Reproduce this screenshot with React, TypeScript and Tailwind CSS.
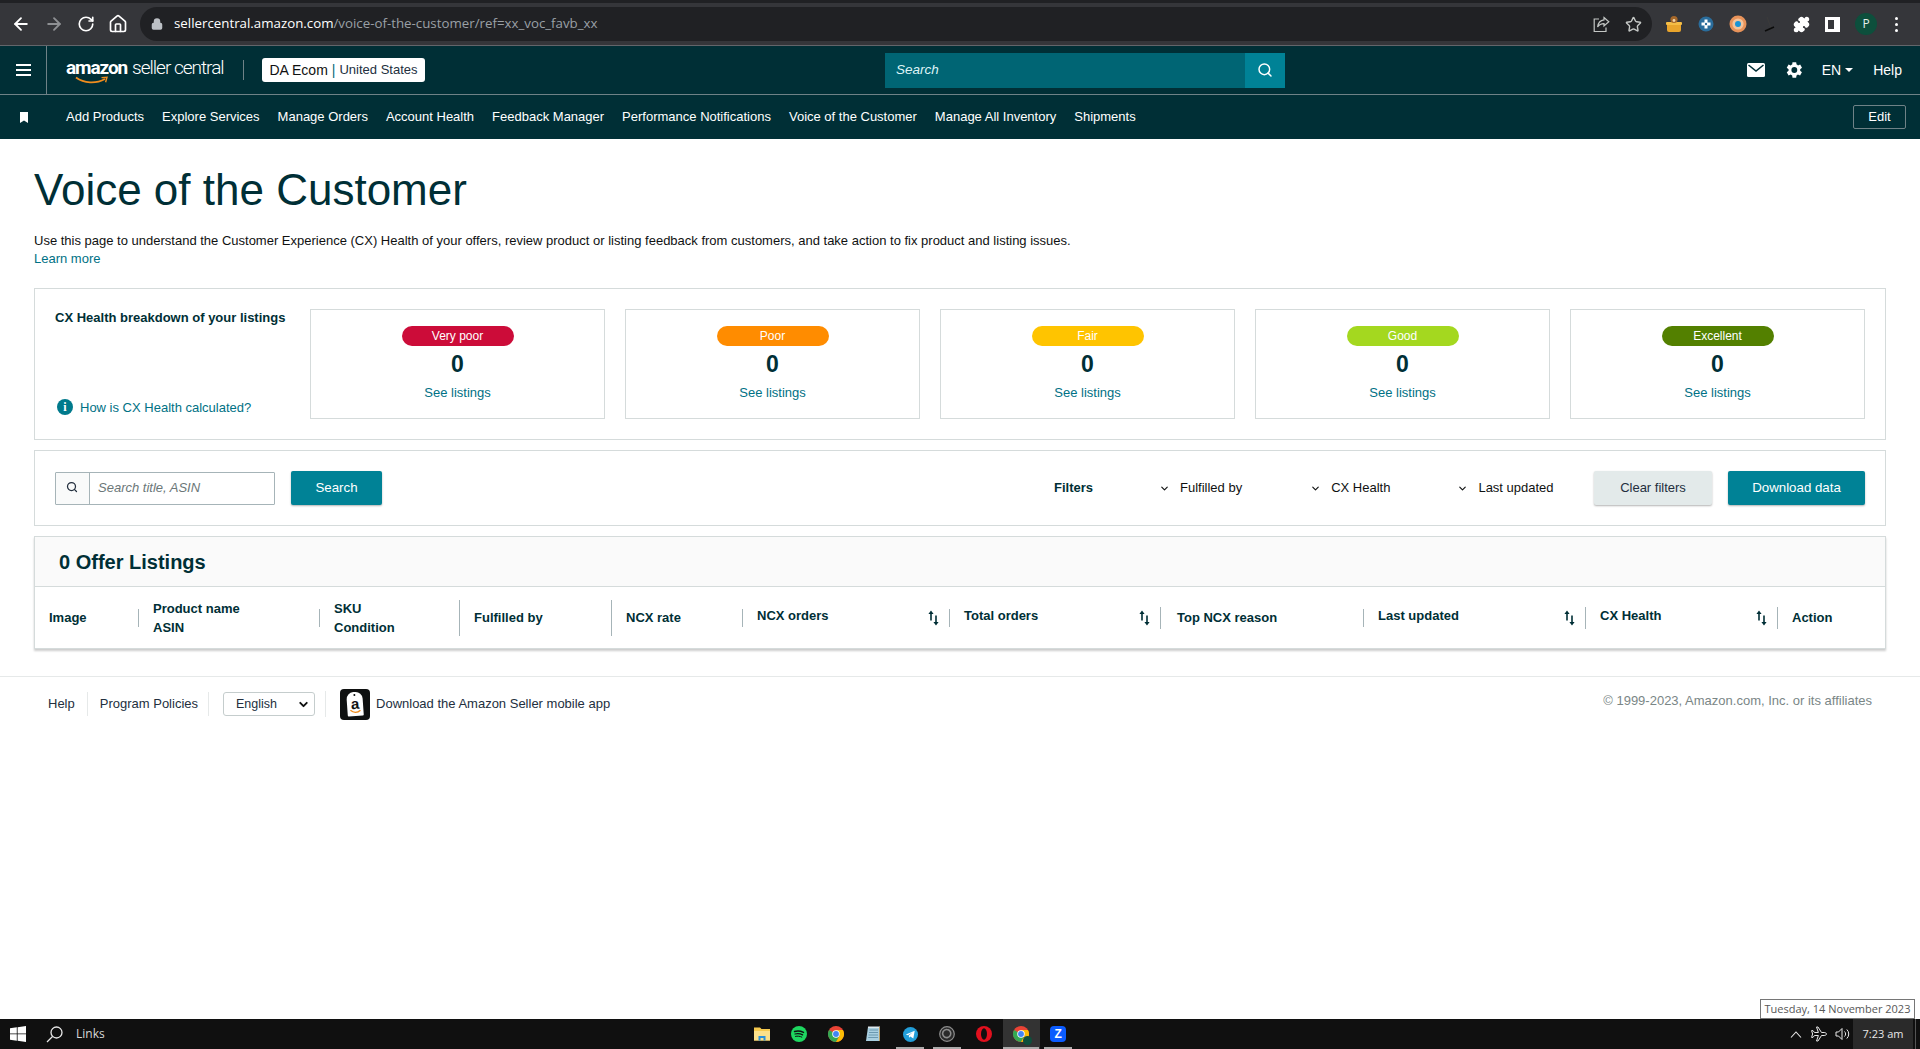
import React from "react"
import { ArrowLeft, ArrowRight, RotateCw, Home, Lock, Star, Search, ChevronDown, Puzzle } from "lucide-react"

const navItems = [
  "Add Products",
  "Explore Services",
  "Manage Orders",
  "Account Health",
  "Feedback Manager",
  "Performance Notifications",
  "Voice of the Customer",
  "Manage All Inventory",
  "Shipments",
]

const healthCards = [
  { label: "Very poor", pill: "bg-[#cc0c39]" },
  { label: "Poor", pill: "bg-[#ff8c00]" },
  { label: "Fair", pill: "bg-[#ffc400]" },
  { label: "Good", pill: "bg-[#a4d81f]" },
  { label: "Excellent", pill: "bg-[#538000]" },
]

const columns = [
  { lines: ["Image"], width: "w-[104px]", sep: "h-[18px]" },
  { lines: ["Product name", "ASIN"], width: "w-[181px]", sep: "h-[18px]" },
  { lines: ["SKU", "Condition"], width: "w-[140px]", sep: "h-[36px]" },
  { lines: ["Fulfilled by"], width: "w-[152px]", sep: "h-[36px]" },
  { lines: ["NCX rate"], width: "w-[131px]", sep: "h-[18px]" },
  { lines: ["NCX orders"], width: "w-[207px]", sep: "h-[18px]", sort: true },
  { lines: ["Total orders"], width: "w-[211px]", sep: "h-[22px]", sort: true },
  { lines: ["Top NCX reason"], width: "w-[203px]", sep: "h-[18px]", inset: "pl-[16px]" },
  { lines: ["Last updated"], width: "w-[222px]", sep: "h-[22px]", sort: true },
  { lines: ["CX Health"], width: "w-[192px]", sep: "h-[22px]", sort: true },
  { lines: ["Action"], width: "flex-1" },
]

const SortIcon = () => (
  <svg width="11" height="16" viewBox="0 0 11 16" className="shrink-0 block text-[#002f36]">
    <path d="M3 0.5 L0.4 4 H2.2 V10.5 H3.8 V4 H5.6 Z" fill="currentColor" />
    <path d="M8 15.5 L5.4 12 H7.2 V5.5 H8.8 V12 H10.6 Z" fill="currentColor" />
  </svg>
)

const ChromeIcon = ({ size = 16 }: { size?: number }) => (
  <svg width={size} height={size} viewBox="0 0 24 24">
    <circle cx="12" cy="12" r="12" fill="#ea4335" />
    <path d="M12 12 L1.6 6 A12 12 0 0 0 12 24 L18 13.6 Z" fill="#34a853" />
    <path d="M12 6 H22.4 A12 12 0 0 1 12 24 L18 13.6 Z" fill="#fbbc05" />
    <circle cx="12" cy="12" r="5.6" fill="#fff" />
    <circle cx="12" cy="12" r="4.4" fill="#4285f4" />
  </svg>
)

const BrowserBar = () => (
  <div className="h-[46px] shrink-0 bg-[#35363a] border-t-[3px] border-t-[#202124] border-b border-b-[#63656a] flex items-center text-[#dee1e6]">
    <div className="w-[140px] shrink-0 flex items-center pl-[11px] gap-[13px]">
      <ArrowLeft size={20} strokeWidth={2.2} className="text-white" />
      <ArrowRight size={20} strokeWidth={2.2} className="text-[#8e9093]" />
      <RotateCw size={18} strokeWidth={2.2} className="text-white" />
      <Home size={20} strokeWidth={2} className="text-white" />
    </div>
    <div className="w-[1512px] h-[34px] rounded-full bg-[#202124] flex items-center pl-[11px] pr-[10px] font-['Open_Sans',sans-serif] text-[13.3px]">
      <Lock size={12} strokeWidth={3} fill="currentColor" className="text-[#bdc1c6] mr-[11px]" />
      <span className="text-white">sellercentral.amazon.com</span>
      <span className="text-[#9aa0a6]">/voice-of-the-customer/ref=xx_voc_favb_xx</span>
      <div className="ml-auto flex items-center gap-[15px] text-[#c4c7c5]">
        <svg width="17" height="17" viewBox="0 0 17 17" fill="none" stroke="currentColor" strokeWidth="1.2">
          <path d="M11 1.5 L15.8 5.8 L11 10 V7.6 C8 7.6 6 8.8 4.6 11 C5 7.5 7 4.4 11 3.9 Z" />
          <path d="M6 3 H1.2 V15.5 H13 V11.5" />
        </svg>
        <Star size={17} strokeWidth={2} />
      </div>
    </div>
    <div className="flex-1 flex items-center pl-[13px] gap-[15px]">
      <svg width="18" height="18" viewBox="0 0 18 18">
        <rect x="2" y="7" width="14" height="10" rx="2" fill="#e9a52c" />
        <rect x="1" y="7" width="16" height="3" rx="1" fill="#f5bd45" />
        <circle cx="9" cy="4.5" r="3.6" fill="#a5682a" />
        <circle cx="9" cy="5.5" r="1.4" fill="#f0d6ae" />
      </svg>
      <svg width="16" height="18" viewBox="0 0 16 18">
        <circle cx="8" cy="9" r="7.5" fill="#2a6d9c" />
        <path d="M6.5 4.5 H9.5 V7.5 H12.5 V10.5 H9.5 V13.5 H6.5 V10.5 H3.5 V7.5 H6.5 Z" fill="#fff" />
        <circle cx="8" cy="9" r="1.2" fill="#2a6d9c" />
      </svg>
      <svg width="18" height="18" viewBox="0 0 18 18">
        <circle cx="9" cy="9" r="8.5" fill="#e8935a" />
        <circle cx="9" cy="9" r="5.6" fill="#f4c49c" />
        <circle cx="9" cy="9" r="3" fill="#1a93d6" />
      </svg>
      <svg width="16" height="18" viewBox="0 0 16 18" fill="none">
        <path d="M5 2 L9 13" stroke="#3b3b3b" strokeWidth="1" />
        <path d="M3 16 L12 12" stroke="#0b0b0b" strokeWidth="1.6" />
      </svg>
      <Puzzle size={17} fill="#fff" className="text-white" />
      <div className="w-[15px] h-[15px] border-[3px] border-white border-r-[6px]" />
      <div className="w-[22px] h-[22px] rounded-full bg-[#0d4f3c] text-[#e6f0ec] flex items-center justify-center text-[12px] font-['Open_Sans',sans-serif]">
        P
      </div>
      <div className="flex flex-col gap-[3px] ml-[3px]">
        <span className="w-[3px] h-[3px] rounded-full bg-white" />
        <span className="w-[3px] h-[3px] rounded-full bg-white" />
        <span className="w-[3px] h-[3px] rounded-full bg-white" />
      </div>
    </div>
  </div>
)

const SellerLogo = () => (
  <div className="relative flex items-baseline text-white h-[26px] leading-[24px] whitespace-nowrap font-['Roboto',sans-serif]">
    <span className="font-bold text-[19px] tracking-[-1.1px]">amazon</span>
    <span className="ml-[5px] text-[19px] font-light tracking-[-1px]">seller central</span>
    <svg width="34" height="9" viewBox="0 0 34 9" className="absolute left-[9px] top-[20px]" fill="none">
      <path d="M1 1.5 C9 7.5 21 8 30 3" stroke="#f08d1e" strokeWidth="1.8" />
      <path d="M26.5 1.6 L32 1.2 L30.6 6.2" stroke="#f08d1e" strokeWidth="1.4" />
    </svg>
  </div>
)

const SellerHeader = () => (
  <div className="bg-[#002f36] shrink-0 text-white">
    <div className="h-[48px] flex items-center border-b border-[#6f8287] box-content">
      <div className="w-[47px] h-full border-r border-[#6f8287] flex flex-col items-center justify-center gap-[3px]">
        <span className="w-[15px] h-[2px] bg-white" />
        <span className="w-[15px] h-[2px] bg-white" />
        <span className="w-[15px] h-[2px] bg-white" />
      </div>
      <div className="ml-[19px] w-[159px] pb-[2px]">
        <SellerLogo />
      </div>
      <div className="ml-[18px] w-px h-[20px] bg-[#6f8287]" />
      <div className="ml-[18px] h-[24px] w-[163px] rounded-[3px] bg-white text-[#0f1111] flex items-center justify-center text-[14px]">
        <span className="font-medium">DA Ecom</span>
        <span className="mx-[4px] text-[#00697a]">|</span>
        <span className="text-[13px] text-[#232f3e]">United States</span>
      </div>
      <div className="ml-[460px] w-[400px] h-[35px] flex">
        <div className="flex-1 bg-[#006574] flex items-center pl-[11px] text-[13.5px] italic text-[#dff4f7]">Search</div>
        <div className="w-[40px] bg-[#008296] flex items-center justify-center">
          <Search size={16} strokeWidth={2.2} className="text-white" />
        </div>
      </div>
      <div className="ml-auto flex items-center pr-[18px] text-[14px]">
        <svg width="18" height="14" viewBox="0 0 18 14" className="mr-[19px]">
          <rect width="18" height="14" rx="1.5" fill="#fff" />
          <path d="M1.5 2 L9 8 L16.5 2" fill="none" stroke="#002f36" strokeWidth="1.6" />
        </svg>
        <svg width="20" height="20" viewBox="0 0 24 24" className="mr-[18px]" fill="#fff">
          <path d="M19.4 13a7.6 7.6 0 0 0 0-2l2.2-1.7-2.2-3.8-2.6 1a7.6 7.6 0 0 0-1.7-1L14.6 2.6H10.2L9.8 5.5a7.6 7.6 0 0 0-1.7 1l-2.6-1-2.2 3.8L5.5 11a7.6 7.6 0 0 0 0 2l-2.2 1.7 2.2 3.8 2.6-1a7.6 7.6 0 0 0 1.7 1l.4 2.9h4.4l.4-2.9a7.6 7.6 0 0 0 1.7-1l2.6 1 2.2-3.8ZM12.4 15.5a3.5 3.5 0 1 1 0-7 3.5 3.5 0 0 1 0 7Z" />
        </svg>
        <span>EN</span>
        <span className="ml-[4px] mr-[20px] w-0 h-0 border-x-[4px] border-x-transparent border-t-[4px] border-t-white" />
        <span>Help</span>
      </div>
    </div>
    <div className="h-[44px] flex items-center text-[13px]">
      <div className="w-[47px] flex justify-center">
        <svg width="8" height="11" viewBox="0 0 8 11" fill="#fff">
          <path d="M0 0 H8 V11 L4 8.4 L0 11 Z" />
        </svg>
      </div>
      <div className="ml-[19px] flex items-center gap-[18px] whitespace-nowrap">
        {navItems.map((item) => (
          <span key={item}>{item}</span>
        ))}
      </div>
      <div className="ml-auto mr-[14px] w-[53px] h-[24px] border border-[#6f8287] rounded-[2px] flex items-center justify-center">
        Edit
      </div>
    </div>
  </div>
)

const HealthPanel = () => (
  <section className="h-[152px] border border-[#d5dbdb] flex pl-[20px] pr-[20px] pt-[20px] pb-[20px] gap-[20px]">
    <div className="w-[235px] shrink-0 flex flex-col justify-between">
      <div className="text-[13px] leading-[17px] font-bold text-[#002f36] whitespace-nowrap">CX Health breakdown of your listings</div>
      <div className="flex items-center gap-[7px] text-[13px] text-[#007185] pb-[2px] pl-[2px]">
        <span className="w-[16px] h-[16px] rounded-full bg-[#007a8c] text-white flex items-center justify-center text-[12px] leading-none font-bold font-['Liberation_Serif',serif]">
          i
        </span>
        How is CX Health calculated?
      </div>
    </div>
    {healthCards.map((card) => (
      <div key={card.label} className="flex-1 border border-[#d5dbdb] flex flex-col items-center pt-[16px]">
        <div className={`w-[112px] h-[20px] rounded-full text-white text-[12px] flex items-center justify-center ${card.pill}`}>
          {card.label}
        </div>
        <div className="mt-[5px] text-[23px] leading-[27px] font-bold text-[#002f36]">0</div>
        <div className="mt-[7px] text-[13px] leading-[15px] text-[#007185]">See listings</div>
      </div>
    ))}
  </section>
)

const FilterPanel = () => (
  <section className="mt-[10px] h-[76px] border border-[#d5dbdb] flex items-center px-[20px] text-[13px] text-[#0f1111]">
    <div className="flex h-[33px] w-[220px] border border-[#a6b4b8] rounded-[1px]">
      <div className="w-[34px] bg-[#f9fafa] border-r border-[#a6b4b8] flex items-center justify-center pr-[2px] pb-[2px]">
        <Search size={12} strokeWidth={2.5} className="text-[#232f3e]" />
      </div>
      <div className="flex-1 flex items-center pl-[8px] italic text-[#6b7778]">Search title, ASIN</div>
    </div>
    <button className="ml-[16px] w-[91px] h-[34px] bg-[#008296] rounded-[2px] text-white text-[13.3px] shadow-[0_1px_2px_rgba(0,0,0,0.3)]">
      Search
    </button>
    <span className="ml-[672px] font-bold text-[#002f36]">Filters</span>
    <ChevronDown size={11} strokeWidth={2.5} className="ml-[66px]" />
    <span className="ml-[10px]">Fulfilled by</span>
    <ChevronDown size={11} strokeWidth={2.5} className="ml-[68px]" />
    <span className="ml-[10px]">CX Health</span>
    <ChevronDown size={11} strokeWidth={2.5} className="ml-[67px]" />
    <span className="ml-[10px]">Last updated</span>
    <button className="ml-auto w-[118px] h-[34px] bg-[#e3eaea] rounded-[2px] text-[#232f3e] shadow-[0_1px_2px_rgba(0,0,0,0.3)]">
      Clear filters
    </button>
    <button className="ml-[16px] w-[137px] h-[34px] bg-[#008296] rounded-[2px] text-white text-[13.3px] shadow-[0_1px_2px_rgba(0,0,0,0.3)]">
      Download data
    </button>
  </section>
)

const ListingTable = () => (
  <section className="mt-[10px] border border-[#d5dbdb] shadow-[0_2px_2px_rgba(0,0,0,0.2)]">
    <div className="h-[50px] bg-[#fafafa] border-b border-[#d5dbdb] flex items-center pl-[24px] text-[20px] font-bold text-[#002f36]">
      0 Offer Listings
    </div>
    <div className="h-[61px] flex items-center text-[13px] leading-[19px] font-bold text-[#002f36]">
      {columns.map((col) => (
        <div key={col.lines[0]} className={`flex items-center h-full ${col.width}`}>
          <div className={`flex-1 ${col.inset ?? "pl-[14px]"} ${col.sort ? "pb-[5px]" : ""}`}>
            {col.lines.map((line) => (
              <div key={line}>{line}</div>
            ))}
          </div>
          {col.sort && (
            <span className="mr-[10px]">
              <SortIcon />
            </span>
          )}
          {col.sep && <span className={`w-px bg-[#a6b4b8] ${col.sep}`} />}
        </div>
      ))}
    </div>
  </section>
)

const PageFooter = () => (
  <footer className="mt-[27px] border-t border-[#e6e9e9] h-[55px] flex items-center pl-[48px] pr-[48px] text-[13px] text-[#232f3e]">
    <span className="pr-[12px] border-r border-[#e6e9e9] h-[24px] flex items-center">Help</span>
    <span className="pl-[12px] pr-[10px] border-r border-[#e6e9e9] h-[24px] flex items-center">Program Policies</span>
    <div className="ml-[14px] w-[92px] h-[24px] border border-[#c5cdcd] rounded-[3px] flex items-center justify-between pl-[12px] pr-[4px] text-[12.5px]">
      English
      <ChevronDown size={13} strokeWidth={3.5} className="text-[#0f1111]" />
    </div>
    <span className="ml-[10px] h-[26px] border-l border-[#e6e9e9]" />
    <div className="ml-[14px] w-[30px] h-[31px] rounded-[4px] bg-[#0f1111] flex items-center justify-center">
      <div className="relative w-[16px] h-[24px] bg-white rounded-t-[7px] rounded-b-[1px] -rotate-[4deg] flex items-center justify-center text-[15px] leading-none font-bold text-[#0f1111] pb-[1px]">
        <span className="absolute top-[2px] left-[7px] w-[2px] h-[2px] rounded-full bg-[#0f1111]" />
        a
        <svg width="12" height="5" viewBox="0 0 12 5" fill="none" className="absolute bottom-[2px] left-[2px]">
          <path d="M1 1 C4 4 8 4 11 1.5" stroke="#f08d1e" strokeWidth="1.4" />
        </svg>
      </div>
    </div>
    <span className="ml-[6px]">Download the Amazon Seller mobile app</span>
    <span className="ml-auto pb-[6px] text-[#7a8686]">© 1999-2023, Amazon.com, Inc. or its affiliates</span>
  </footer>
)

const TaskIcon = ({ children, active, line }: { children: React.ReactNode; active?: boolean; line?: string }) => (
  <div className={`relative w-[37px] h-full flex items-center justify-center ${active ? "bg-[#333]" : ""}`}>
    {children}
    {line && <span className={`absolute bottom-0 left-1/2 -translate-x-1/2 h-[2px] bg-[#aaaaaa] ${line}`} />}
  </div>
)

const Taskbar = () => (
  <div className="relative h-[30px] shrink-0 bg-[#101010] flex items-center text-white font-['Open_Sans',sans-serif]">
    <svg width="16" height="16" viewBox="0 0 16 16" className="ml-[10px]" fill="#fff">
      <path d="M0 2.3 L6.8 1.3 V7.5 H0 Z M7.6 1.2 L16 0 V7.5 H7.6 Z M0 8.3 H6.8 V14.7 L0 13.7 Z M7.6 8.3 H16 V16 L7.6 14.8 Z" />
    </svg>
    <svg width="17" height="17" viewBox="0 0 17 17" fill="none" stroke="#e8e8e8" strokeWidth="1.3" className="ml-[20px]">
      <circle cx="10.5" cy="6.5" r="5.5" />
      <path d="M6.5 10.5 L1 16" />
    </svg>
    <span className="ml-[13px] text-[12px] text-[#d8d8d8]">Links</span>

    <div className="ml-[639px] flex items-center h-full">
      <TaskIcon>
        <svg width="16" height="16" viewBox="0 0 16 16">
          <path d="M0 1.5 H6 L7.5 3 H16 V14.5 H0 Z" fill="#f6c94e" />
          <path d="M0 5 H16 V14.5 H0 Z" fill="#fbe08a" />
          <path d="M4.5 14.5 V10 H11.5 V14.5 H9.5 V12 H6.5 V14.5 Z" fill="#2a8fd8" />
        </svg>
      </TaskIcon>
      <TaskIcon>
        <svg width="16" height="16" viewBox="0 0 16 16" fill="none">
          <circle cx="8" cy="8" r="8" fill="#1ed760" />
          <path d="M3.5 5.5 C6.5 4.7 9.7 5 12.5 6.4" stroke="#101010" strokeWidth="1.4" strokeLinecap="round" />
          <path d="M4 8 C6.5 7.4 9.2 7.6 11.6 8.9" stroke="#101010" strokeWidth="1.2" strokeLinecap="round" />
          <path d="M4.5 10.4 C6.6 9.9 8.8 10.1 10.8 11.1" stroke="#101010" strokeWidth="1" strokeLinecap="round" />
        </svg>
      </TaskIcon>
      <TaskIcon>
        <ChromeIcon />
      </TaskIcon>
      <TaskIcon>
        <svg width="16" height="16" viewBox="0 0 16 16">
          <path d="M3 1 H15 V15 H1 Z" fill="#a9cfe0" />
          <path d="M4.5 4 H13 M4 6.5 H13 M3.6 9 H13 M3.2 11.5 H13" stroke="#5c8aa3" strokeWidth="0.8" />
          <path d="M3 0.5 H15 V2 H3 Z" fill="#dfe9ee" />
          <path d="M15 1 V15 H14 V1 Z" fill="#b89b63" />
        </svg>
      </TaskIcon>
      <TaskIcon line="w-[28px]">
        <svg width="15" height="15" viewBox="0 0 16 16">
          <circle cx="8" cy="8" r="8" fill="#229ed9" />
          <path d="M3 8 L12.5 4 L11 12.2 L7.8 10 L6.4 11.5 L6.2 9 L10.5 5.6 L5.2 8.8 Z" fill="#fff" />
        </svg>
      </TaskIcon>
      <TaskIcon line="w-[28px]">
        <svg width="16" height="16" viewBox="0 0 16 16" fill="none" stroke="#8d8d8d">
          <circle cx="8" cy="8" r="7.3" strokeWidth="1.2" fill="#2a2a2a" />
          <path d="M8 3.5 A4 4 0 0 1 11.5 9 M11.5 9 A4 4 0 0 1 4.5 10 M4.5 10 A4 4 0 0 1 8 3.5" strokeWidth="1.6" />
        </svg>
      </TaskIcon>
      <TaskIcon>
        <svg width="16" height="16" viewBox="0 0 16 16">
          <circle cx="8" cy="8" r="8" fill="#e2101e" />
          <ellipse cx="8" cy="8" rx="3" ry="5.8" fill="#101010" />
        </svg>
      </TaskIcon>
      <TaskIcon active line="w-[36px]">
        <span className="relative">
          <ChromeIcon />
          <span className="absolute -right-[3px] -bottom-[3px] w-[9px] h-[9px] rounded-full bg-[#0d4f3c]" />
        </span>
      </TaskIcon>
      <TaskIcon line="w-[28px]">
        <div className="w-[16px] h-[16px] rounded-[4px] bg-[#0b5cff] flex items-center justify-center text-[12px] leading-none font-bold font-['Liberation_Sans',sans-serif]">
          Z
        </div>
      </TaskIcon>
    </div>

    <div className="ml-auto flex items-center h-full text-[#e8e8e8]">
      <svg width="12" height="7" viewBox="0 0 12 7" fill="none" stroke="currentColor" strokeWidth="1.1" className="mr-[9px]">
        <path d="M1 6.5 L6 1 L11 6.5" />
      </svg>
      <svg width="16" height="16" viewBox="0 0 16 16" fill="none" stroke="currentColor" strokeWidth="1" className="mr-[8px]">
        <path d="M15.5 8 C15.5 7 14 6.5 13 6.5 H10.5 L7 1 H5.5 L7.4 6.5 H3.5 L2 4.6 H0.6 L1.6 8 L0.6 11.4 H2 L3.5 9.5 H7.4 L5.5 15 H7 L10.5 9.5 H13 C14 9.5 15.5 9 15.5 8 Z" />
      </svg>
      <svg width="16" height="14" viewBox="0 0 16 14" fill="none" stroke="currentColor" strokeWidth="1" className="mr-[2px]">
        <path d="M1 5 H3.5 L7 1.5 V12.5 L3.5 9 H1 Z" />
        <path d="M9.5 4.5 A3.4 3.4 0 0 1 9.5 9.5 M11.8 2.5 A6.2 6.2 0 0 1 11.8 11.5" />
      </svg>
      <div className="h-full w-[60px] bg-[#2a2a2a] flex items-center justify-center text-[11px]">7:23 am</div>
      <div className="w-[5px] h-full border-l border-[#555] ml-[2px]" />
    </div>

    <div className="absolute right-[5px] bottom-[30px] h-[20px] w-[155px] bg-white border border-[#767676] flex items-center justify-center text-[11px] text-[#575757] whitespace-nowrap">
      Tuesday, 14 November 2023
    </div>
  </div>
)

export default function App() {
  return (
    <div className="h-screen flex flex-col overflow-hidden bg-white font-['Liberation_Sans',Arial,sans-serif]">
      <BrowserBar />
      <SellerHeader />
      <div className="flex-1 min-h-0">
        <main className="px-[34px] pt-[25px]">
          <h1 className="text-[44px] leading-[52px] font-normal text-[#002f36]">Voice of the Customer</h1>
          <p className="mt-[16px] text-[13px] leading-[18px] text-[#0f1111]">
            Use this page to understand the Customer Experience (CX) Health of your offers, review product or listing feedback from customers, and take action to fix product and listing issues.
          </p>
          <a className="block text-[13px] leading-[18px] text-[#007185]">Learn more</a>
          <div className="mt-[20px]">
            <HealthPanel />
            <FilterPanel />
            <ListingTable />
          </div>
        </main>
        <PageFooter />
      </div>
      <Taskbar />
    </div>
  )
}
